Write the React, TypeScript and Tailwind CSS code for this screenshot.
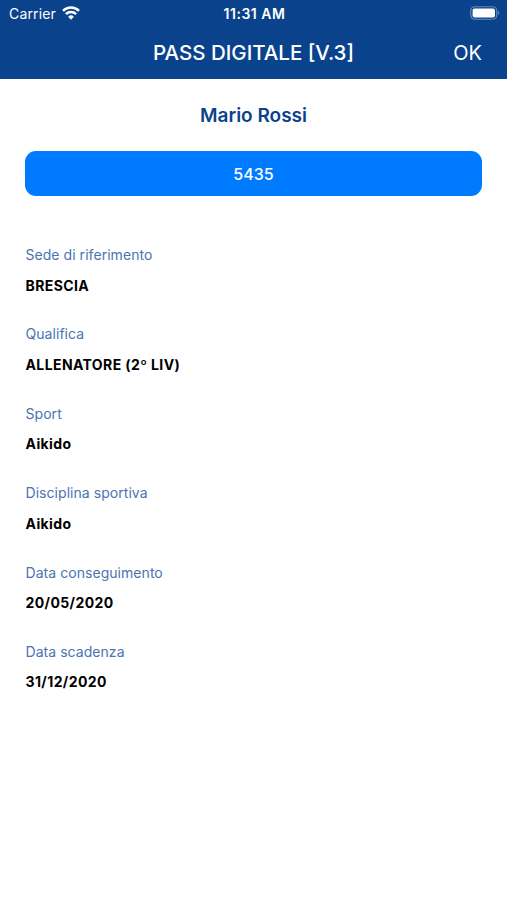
interface PassField {
  label: string;
  value: string;
}

const FIELDS: PassField[] = [
  { label: "Sede di riferimento", value: "BRESCIA" },
  { label: "Qualifica", value: "ALLENATORE (2º LIV)" },
  { label: "Sport", value: "Aikido" },
  { label: "Disciplina sportiva", value: "Aikido" },
  { label: "Data conseguimento", value: "20/05/2020" },
  { label: "Data scadenza", value: "31/12/2020" },
];

function App() {
  return (
    <div className="flex h-[900px] w-[507px] flex-col overflow-hidden bg-white font-['Inter',sans-serif]">
      <header className="flex h-[79px] flex-col bg-[#0b428c] text-white">
        <StatusBar />
        <NavBar title="PASS DIGITALE [V.3]" />
      </header>
      <main className="flex flex-col px-[25px]">
        <h2 className="mt-[23px] text-center text-[19px] leading-7 font-semibold text-[#0b428c]">Mario Rossi</h2>
        <button
          type="button"
          className="mt-[21px] h-[45px] rounded-[11px] bg-[#007aff] text-[16px] font-medium tracking-[0.1px] text-white"
        >
          5435
        </button>
        <dl className="mt-[47px] flex flex-col pl-[0.5px]">
          {FIELDS.map((field) => (
            <FieldRow key={field.label} {...field} />
          ))}
        </dl>
      </main>
    </div>
  );
}

const StatusBar = () => {
  return (
    <div className="grid h-[26px] grid-cols-3 items-center pr-[7px] pl-[9px] text-[14px]">
      <span className="flex items-center gap-[6px] tracking-[0.15px]">
        Carrier
        <WifiIcon />
      </span>
      <span className="pt-px text-center text-[14px] font-semibold tracking-[0.5px]">11:31 AM</span>
      <BatteryIcon />
    </div>
  );
};

interface NavBarProps {
  title: string;
}

const NavBar = ({ title }: NavBarProps) => {
  return (
    <div className="grid h-[53px] grid-cols-[1fr_auto_1fr] items-center px-[25px]">
      <span />
      <h1 className="pt-px text-[20.5px] font-medium">{title}</h1>
      <button type="button" className="text-right text-[20px]">
        OK
      </button>
    </div>
  );
};

const FieldRow = ({ label, value }: PassField) => {
  return (
    <div className="h-[79.4px]">
      <dt className="text-[14px] leading-6 tracking-[0.05px] text-[#4a74b2]">{label}</dt>
      <dd className="mt-[6.5px] text-[14px] leading-6 font-bold tracking-[0.4px] text-black">{value}</dd>
    </div>
  );
};

const WifiIcon = () => {
  return (
    <svg viewBox="0 0 18 14" className="h-[14px] w-[18px]" fill="none" stroke="currentColor" strokeWidth="2.5">
      <path d="M1 4.8a11.6 11.6 0 0 1 16 0" />
      <path d="M3.9 8.2a7.2 7.2 0 0 1 10.2 0" />
      <path d="M6.1 10.7a4.1 4.1 0 0 1 5.8 0L9 13.7z" fill="currentColor" stroke="none" />
    </svg>
  );
};

const BatteryIcon = () => {
  return (
    <svg viewBox="0 0 30 14" className="h-[14px] w-[30px] justify-self-end" fill="none">
      <rect x="0.75" y="0.75" width="26" height="12.5" rx="4" stroke="#6489bd" strokeWidth="1.2" />
      <rect x="2.6" y="2.6" width="22.4" height="8.8" rx="2" fill="white" />
      <path d="M28 5c1.6.6 1.6 3.4 0 4z" fill="#6489bd" />
    </svg>
  );
};

export default App;
